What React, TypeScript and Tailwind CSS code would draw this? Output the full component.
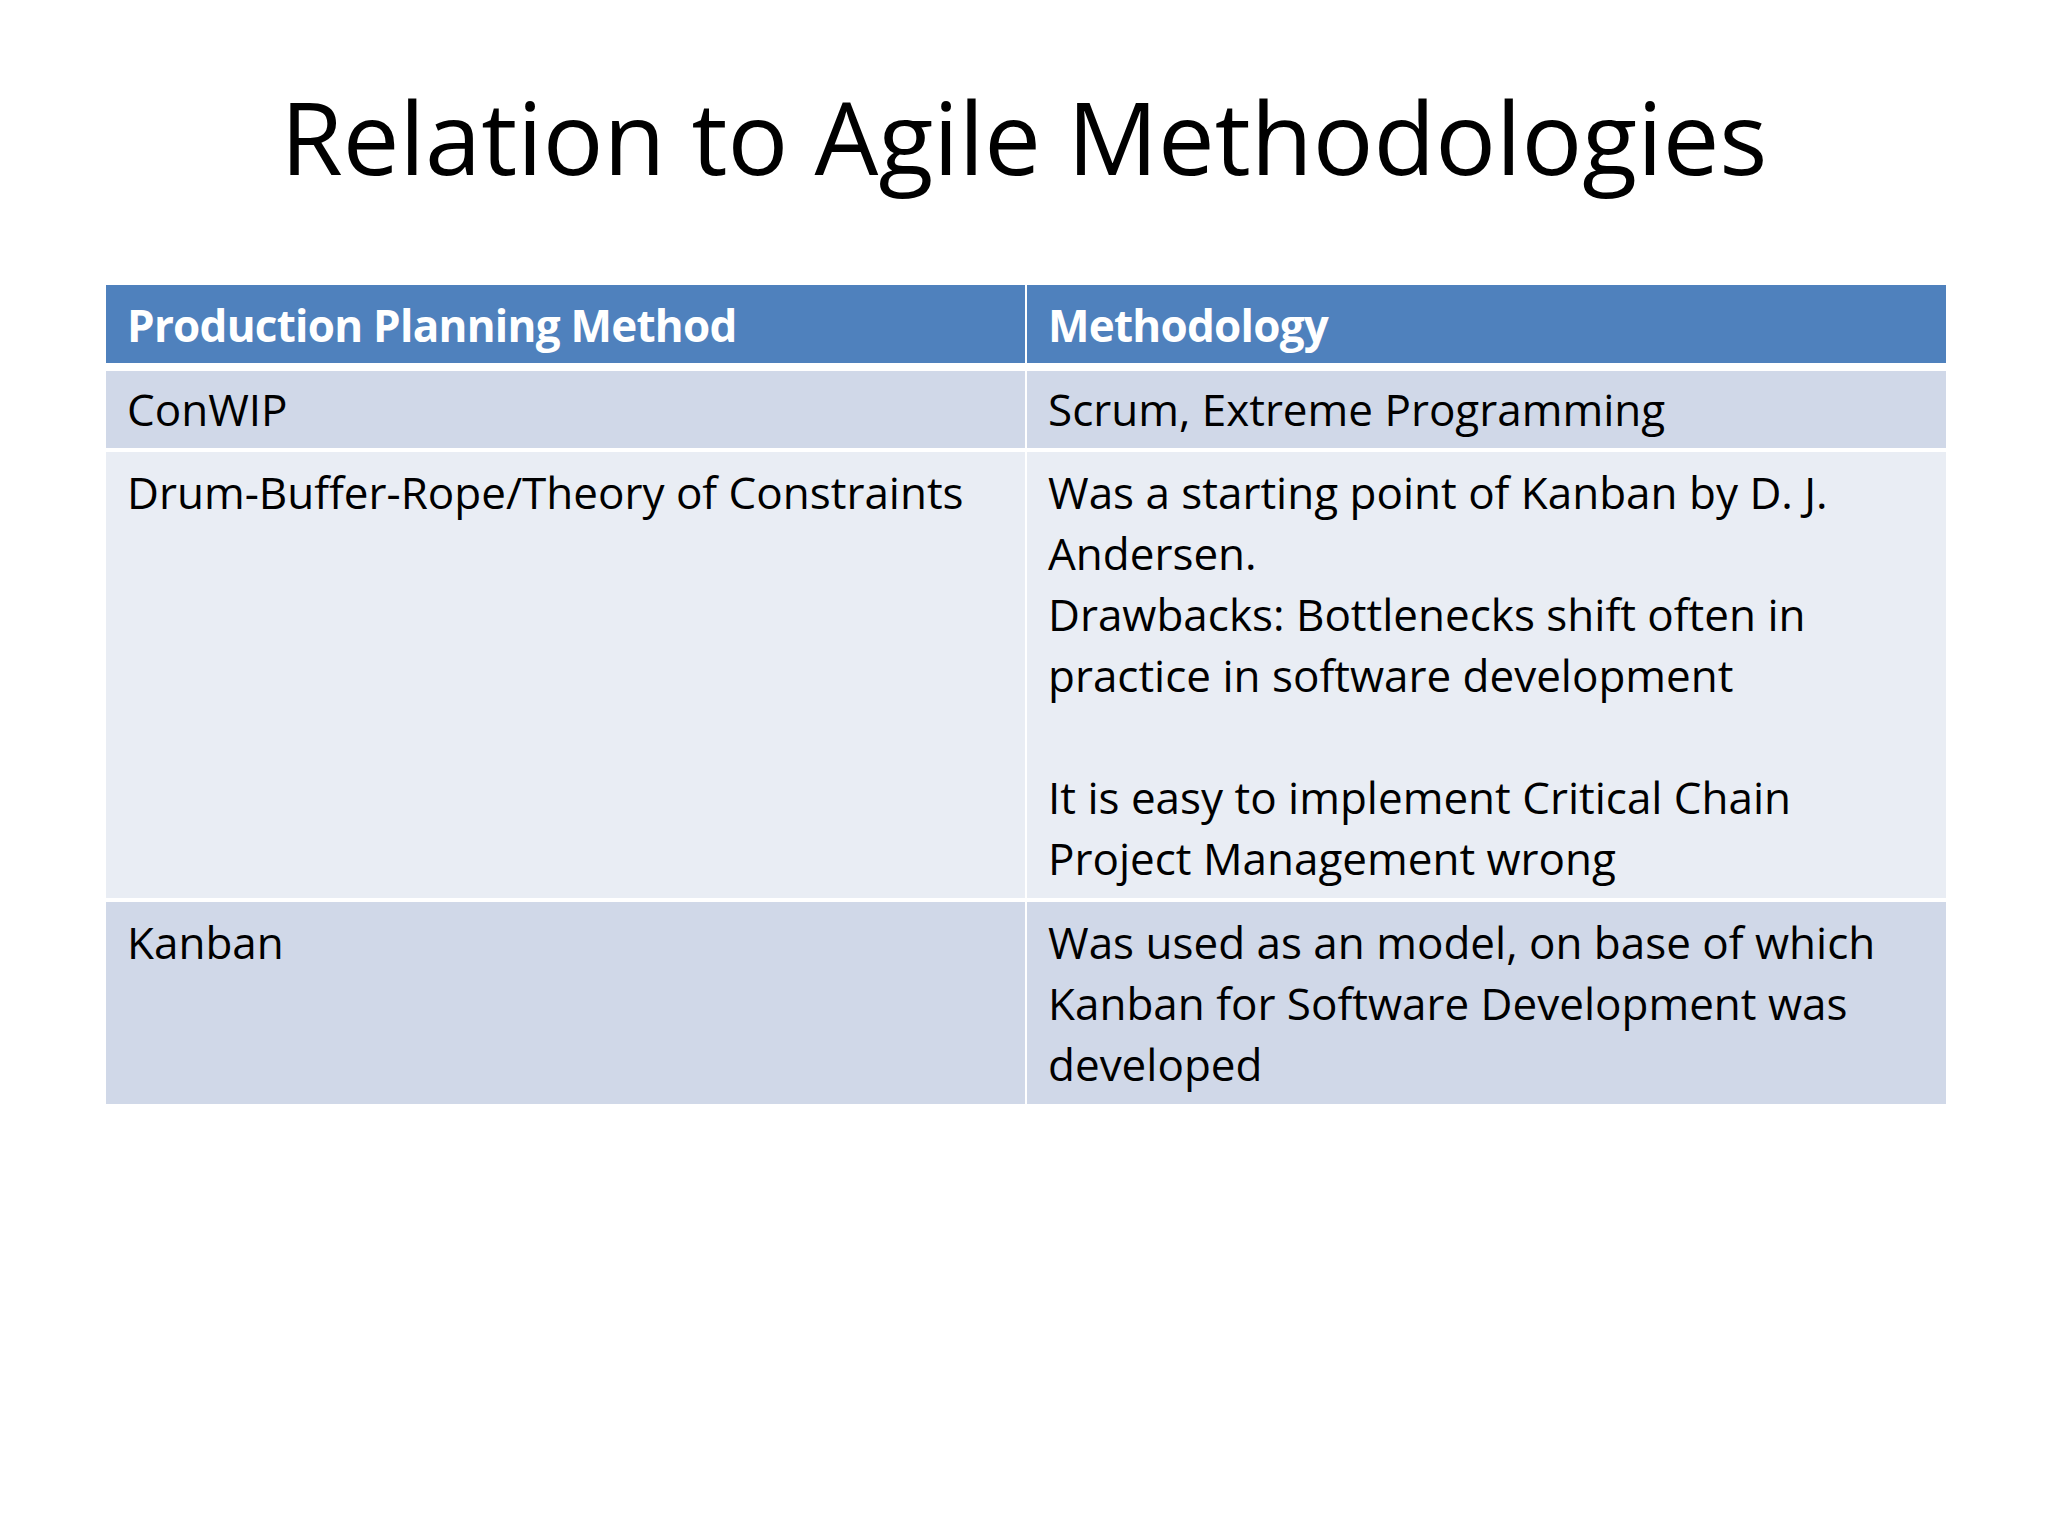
import React from "react";

const font = { fontFamily: '"Open Sans", "Noto Sans", sans-serif' };

function Lines({ lines }: { lines: string[] }) {
  return (
    <>
      {lines.map((l, i) => (
        <div key={i} className="whitespace-nowrap h-[61px]">
          {l === "" ? "\u00a0" : l}
        </div>
      ))}
    </>
  );
}

export default function App() {
  return (
    <div
      className="w-[2048px] h-[1536px] bg-white text-black overflow-hidden"
      style={font}
    >
      <div className="pt-[86px] h-[188px]">
        <h1 className="text-center text-[101px] leading-[101px] font-normal text-black">
          Relation to Agile Methodologies
        </h1>
      </div>
      <div className="mt-[97px] ml-[106px] w-[1840px] grid grid-cols-2 gap-x-[2px] text-[44px] leading-[61px]">
        <div className="h-[78px] bg-[#4f81bd] text-white font-bold tracking-[-0.75px] px-[21px] pt-[10px] whitespace-nowrap">
          Production Planning Method
        </div>
        <div className="h-[78px] bg-[#4f81bd] text-white font-bold tracking-[-0.75px] px-[21px] pt-[10px] whitespace-nowrap">
          Methodology
        </div>

        <div className="mt-[8px] h-[77px] bg-[#d0d8e8] px-[21px] pt-[8px]">
          ConWIP
        </div>
        <div className="mt-[8px] h-[77px] bg-[#d0d8e8] px-[21px] pt-[8px]">
          Scrum, Extreme Programming
        </div>

        <div className="mt-[4px] h-[446px] bg-[#e9edf4] px-[21px] pt-[10px]">
          <Lines lines={["Drum-Buffer-Rope/Theory of Constraints"]} />
        </div>
        <div className="mt-[4px] h-[446px] bg-[#e9edf4] px-[21px] pt-[10px]">
          <Lines
            lines={[
              "Was a starting point of Kanban by D. J.",
              "Andersen.",
              "Drawbacks: Bottlenecks shift often in",
              "practice in software development",
              "",
              "It is easy to implement Critical Chain",
              "Project Management wrong",
            ]}
          />
        </div>

        <div className="mt-[4px] h-[202px] bg-[#d0d8e8] px-[21px] pt-[10px]">
          <Lines lines={["Kanban"]} />
        </div>
        <div className="mt-[4px] h-[202px] bg-[#d0d8e8] px-[21px] pt-[10px]">
          <Lines
            lines={[
              "Was used as an model, on base of which",
              "Kanban for Software Development was",
              "developed",
            ]}
          />
        </div>
      </div>
    </div>
  );
}
